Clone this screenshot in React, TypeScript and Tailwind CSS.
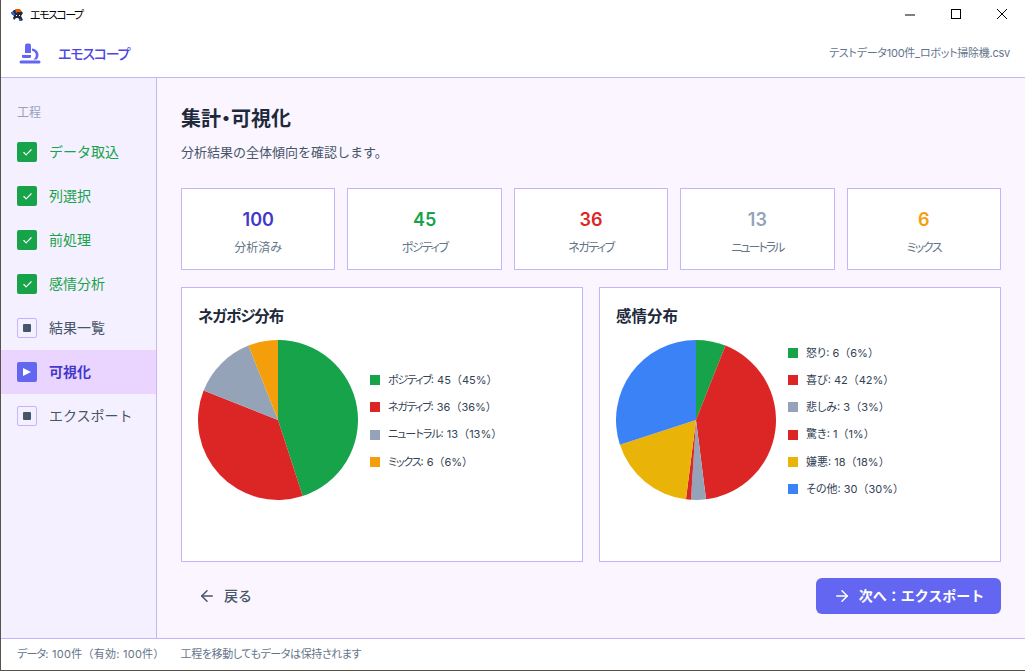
import { ArrowLeft, ArrowRight, Check } from 'lucide-react';

interface Slice {
  label: string;
  value: number;
  color: string;
  swatch: string;
  track?: string;
}

const sentiment: Slice[] = [
  { label: 'ポジティブ', value: 45, color: '#16a34a', swatch: 'bg-[#16a34a]', track: 'tracking-[-1.2px]' },
  { label: 'ネガティブ', value: 36, color: '#dc2626', swatch: 'bg-[#dc2626]', track: 'tracking-[-1.2px]' },
  { label: 'ニュートラル', value: 13, color: '#94a3b8', swatch: 'bg-[#94a3b8]', track: 'tracking-[-1px]' },
  { label: 'ミックス', value: 6, color: '#f59e0b', swatch: 'bg-[#f59e0b]', track: 'tracking-[-1.2px]' },
];

const emotions: Slice[] = [
  { label: '怒り', value: 6, color: '#16a34a', swatch: 'bg-[#16a34a]' },
  { label: '喜び', value: 42, color: '#dc2626', swatch: 'bg-[#dc2626]' },
  { label: '悲しみ', value: 3, color: '#94a3b8', swatch: 'bg-[#94a3b8]' },
  { label: '驚き', value: 1, color: '#dc2626', swatch: 'bg-[#dc2626]' },
  { label: '嫌悪', value: 18, color: '#eab308', swatch: 'bg-[#eab308]' },
  { label: 'その他', value: 30, color: '#3b82f6', swatch: 'bg-[#3b82f6]' },
];

const stats = [
  { value: '100', label: '分析済み', color: 'text-[#4338ca]', track: '' },
  { value: '45', label: 'ポジティブ', color: 'text-[#16a34a]', track: 'tracking-[-1.5px]' },
  { value: '36', label: 'ネガティブ', color: 'text-[#dc2626]', track: 'tracking-[-1.5px]' },
  { value: '13', label: 'ニュートラル', color: 'text-[#94a3b8]', track: 'tracking-[-2px]' },
  { value: '6', label: 'ミックス', color: 'text-[#f59e0b]', track: 'tracking-[-1.5px]' },
];

const doneSteps = ['データ取込', '列選択', '前処理', '感情分析'];

// Pie drawn clockwise from 12 o'clock
function Pie({ data }: { data: Slice[] }) {
  const total = data.reduce((sum, s) => sum + s.value, 0);
  let acc = 0;
  const point = (v: number) => {
    const a = (v / total) * Math.PI * 2;
    return `${80 + 80 * Math.sin(a)} ${80 - 80 * Math.cos(a)}`;
  };
  return (
    <svg width="160" height="160" viewBox="0 0 160 160" className="shrink-0">
      {data.map((s) => {
        const start = point(acc);
        acc += s.value;
        const large = s.value / total > 0.5 ? 1 : 0;
        return <path key={s.label} d={`M80 80L${start}A80 80 0 ${large} 1 ${point(acc)}Z`} fill={s.color} />;
      })}
    </svg>
  );
}

function ChartCard({ title, titleTrack, data }: { title: string; titleTrack?: string; data: Slice[] }) {
  return (
    <div className="flex-1 h-[275px] border border-[#c4b5fd] bg-white pt-[19px] pl-4">
      <h2 className={`text-[15.5px] leading-5 font-bold text-[#1e293b] [font-feature-settings:'palt'] ${titleTrack ?? ''}`}>{title}</h2>
      <div className="flex items-center gap-3 mt-[13px]">
        <Pie data={data} />
        <ul className="flex flex-col -mt-[1px] -mb-[3px]">
          {data.map((s) => (
            <li key={s.label} className="flex items-center h-[27.2px] text-[11px] text-[#334155]">
              <span className={`w-[10px] h-[10px] mr-2 ${s.swatch}`} />
              <span className={`[font-feature-settings:'palt'] ${s.track ?? ''}`}>{s.label}</span>
              <span className="whitespace-pre">: {s.value}（{s.value}%）</span>
            </li>
          ))}
        </ul>
      </div>
    </div>
  );
}

export default function App() {
  return (
    <div className="w-[1025px] h-[671px] flex flex-col overflow-hidden bg-white border-l border-b border-[#5b5149] font-['Inter','Noto_Sans_CJK_JP',sans-serif]">
      {/* Window title bar */}
      <div className="h-[30px] flex items-center shrink-0">
        <svg width="14" height="14" viewBox="0 0 14 14" className="ml-[9px]">
          <path d="M1 5l3-3h6l3 3-2 3 2 4-2 1-3-3H6l-2 2-1-2 1-2z" fill="#1f2937" />
          <path d="M5 1h5l2 3H8L6 5z" fill="#ea580c" />
          <path d="M1 4h3l1 3H2z" fill="#2563eb" />
          <path d="M6 7h1v1H6zM9 7h1v1H9z" fill="#fff" />
          <path d="M9 11h2v2H9z" fill="#2563eb" />
        </svg>
        <span className="ml-[6px] text-[11px] tracking-[-1.5px] text-black [font-feature-settings:'palt']">エモスコープ</span>
        <div className="ml-auto flex items-center">
          <svg width="46" height="30" viewBox="0 0 46 30">
            <path d="M18 15h10" stroke="#000" strokeWidth="1" />
          </svg>
          <svg width="46" height="30" viewBox="0 0 46 30">
            <rect x="18.5" y="9.5" width="9" height="9" fill="none" stroke="#000" />
          </svg>
          <svg width="46" height="30" viewBox="0 0 46 30">
            <path d="M18 9l10 10M28 9L18 19" stroke="#000" fill="none" />
          </svg>
        </div>
      </div>

      {/* App header */}
      <header className="h-[48px] flex items-center shrink-0 pl-[18px] pr-[15px] border-b border-[#c4b5fd]">
        <svg width="22" height="21" viewBox="0 0 22 21" className="text-[#6366f1]" fill="currentColor">
          <path d="M6 2.5a2 2 0 0 1 2-2h2a2 2 0 0 1 2 2V10H6z" />
          <path d="M13 5.5c4 .5 6.5 3 6.5 6.5 0 2-1 3.5-2 4.5h-3.3c1.5-1 2.6-2.500 2.600-4.500 0-2.200-1.500-3.800-3.800-4.200z" />
          <path d="M3 12h9v1.500a1.500 1.500 0 0 1-1.500 1.500h-6A1.500 1.500 0 0 1 3 13.500z" />
          <rect x="0.500" y="17.500" width="21" height="3" rx="1.500" />
        </svg>
        <span className="ml-[17px] text-sm tracking-[-1.2px] font-medium text-[#4f46e5] [font-feature-settings:'palt']">エモスコープ</span>
        <span className="ml-auto text-[11px] tracking-[-0.25px] text-[#64748b] [font-feature-settings:'palt']">テストデータ100件_ロボット掃除機.csv</span>
      </header>

      <div className="flex-1 flex min-h-0">
        {/* Step sidebar */}
        <aside className="w-[156px] shrink-0 bg-[#f5f0ff] border-r border-[#c4b5fd]">
          <div className="pl-4 pt-[27px] h-[52px] text-xs leading-4 text-[#94a3b8]">工程</div>
          {doneSteps.map((name) => (
            <div key={name} className="h-11 flex items-center pl-4 gap-3 text-sm text-[#16a34a]">
              <span className="w-5 h-5 rounded-[2px] bg-[#16a34a] flex items-center justify-center">
                <Check className="w-[11px] h-[11px] text-white" strokeWidth={2.5} />
              </span>
              {name}
            </div>
          ))}
          <div className="h-11 flex items-center pl-4 gap-3 text-sm text-[#475569]">
            <span className="w-5 h-5 rounded-[2px] border border-[#c4b5fd] flex items-center justify-center">
              <span className="w-2 h-2 rounded-[1px] bg-[#475569]" />
            </span>
            結果一覧
          </div>
          <div className="h-11 flex items-center pl-4 gap-3 text-sm font-bold text-[#4338ca] bg-[#e9d5ff]">
            <span className="w-5 h-5 rounded-[2px] bg-[#6366f1] flex items-center justify-center">
              <svg width="8" height="8" viewBox="0 0 8 8">
                <path d="M0 0l8 4-8 4z" fill="#fff" />
              </svg>
            </span>
            可視化
          </div>
          <div className="h-11 flex items-center pl-4 gap-3 text-sm text-[#475569]">
            <span className="w-5 h-5 rounded-[2px] border border-[#c4b5fd] flex items-center justify-center">
              <span className="w-2 h-2 rounded-[1px] bg-[#475569]" />
            </span>
            エクスポート
          </div>
        </aside>

        {/* Main content */}
        <main className="flex-1 min-w-0 bg-[#faf5ff] pl-6 pr-6 pt-[27px]">
          <h1 className="text-xl leading-7 font-bold text-[#1e293b] [font-feature-settings:'palt']">集計・可視化</h1>
          <p className="mt-[11px] mb-[28px] text-[13px] leading-4 text-[#475569]">分析結果の全体傾向を確認します。</p>

          <div className="grid grid-cols-5 gap-3">
            {stats.map((s) => (
              <div key={s.label} className="h-[82px] border border-[#c4b5fd] bg-white flex flex-col items-center pt-[19px]">
                <span className={`text-lg leading-6 font-semibold ${s.color}`}>{s.value}</span>
                <span className={`mt-[8px] text-xs leading-4 text-[#64748b] [font-feature-settings:'palt'] ${s.track}`}>{s.label}</span>
              </div>
            ))}
          </div>

          <div className="flex gap-4 mt-[17px]">
            <ChartCard title="ネガポジ分布" titleTrack="tracking-[-1px]" data={sentiment} />
            <ChartCard title="感情分布" data={emotions} />
          </div>

          <div className="flex items-center justify-between mt-4">
            <button type="button" className="h-9 flex items-center gap-2 pl-[17px] text-sm font-medium text-[#475569]">
              <ArrowLeft className="w-[18px] h-[18px]" />
              戻る
            </button>
            <button
              type="button"
              className="w-[185px] h-9 rounded-md bg-[#6366f1] flex items-center justify-center gap-2 text-sm font-bold text-white"
            >
              <ArrowRight className="w-[18px] h-[18px]" />
              次へ：エクスポート
            </button>
          </div>
        </main>
      </div>

      {/* Status bar */}
      <footer className="h-[32px] shrink-0 border-t border-[#c4b5fd] flex items-center pl-4 gap-[16px] text-[11px] text-[#64748b]">
        <span className="tracking-[0.25px]">
          <span className="[font-feature-settings:'palt'] tracking-[-0.8px]">データ</span>: 100件（有効: 100件）
        </span>
        <span className="[font-feature-settings:'palt'] tracking-[-0.4px]">工程を移動してもデータは保持されます</span>
      </footer>
    </div>
  );
}
